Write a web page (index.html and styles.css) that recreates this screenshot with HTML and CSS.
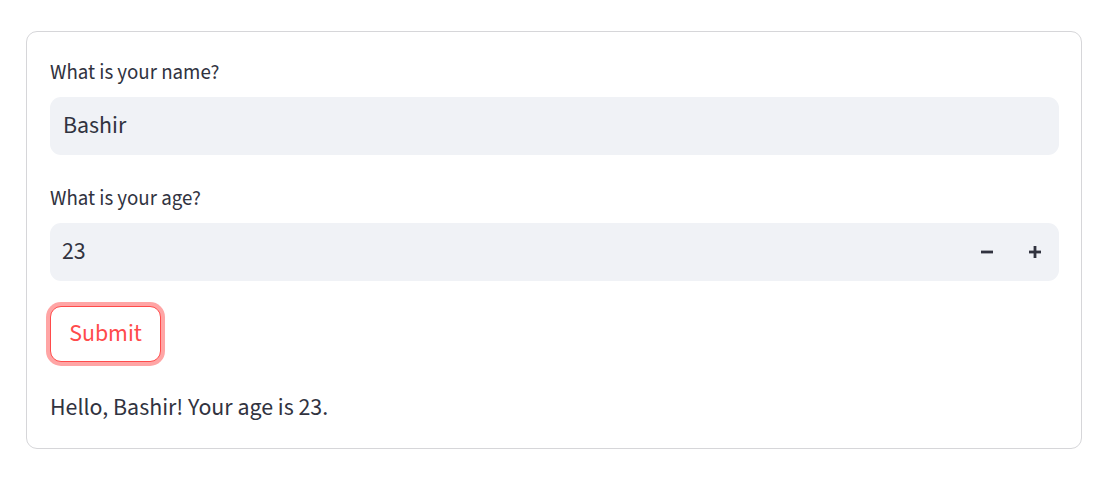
FILE: index.html
```html
<!DOCTYPE html>
<html lang="en">
<head>
<meta charset="utf-8">
<title>Form</title>
<link rel="stylesheet" href="styles.css">
</head>
<body>
<form class="card" onsubmit="return false">
  <label class="label" for="name">What is your name?</label>
  <div class="field">
    <input id="name" class="text" type="text" value="Bashir">
  </div>
  <label class="label label-age" for="age">What is your age?</label>
  <div class="field field-number">
    <input id="age" class="text" type="text" value="23">
    <button type="button" class="step" aria-label="Decrement">
      <svg width="14" height="14" viewBox="0 0 14 14"><rect x="1" y="5.6" width="12" height="2.8" fill="#31333f"/></svg>
    </button>
    <button type="button" class="step" aria-label="Increment">
      <svg width="14" height="14" viewBox="0 0 14 14"><rect x="1" y="5.6" width="12" height="2.8" fill="#31333f"/><rect x="5.6" y="1" width="2.8" height="12" fill="#31333f"/></svg>
    </button>
  </div>
  <button type="submit" class="submit">Submit</button>
  <p class="result">Hello, Bashir! Your age is 23.</p>
</form>
</body>
</html>
```

FILE: styles.css
```css
html, body {
  margin: 0;
  padding: 0;
  background: #ffffff;
}

body {
  font-family: "Source Sans Pro", "Source Sans 3", Lato, "Noto Sans", sans-serif;
  color: #31333f;
  padding: 31px 0 0 26px;
}

.card {
  box-sizing: border-box;
  width: 1056px;
  border: 1px solid #d6d6d9;
  border-radius: 11px;
  padding: 25px 22px 22px 23px;
  display: flex;
  flex-direction: column;
  align-items: flex-start;
}

.label {
  display: block;
  height: 31px;
  line-height: 31px;
  font-size: 20.9px;
  color: #31333f;
  margin-bottom: 9px;
}

.label-age {
  margin-top: 28px;
}

.field {
  box-sizing: border-box;
  width: 1009px;
  height: 58px;
  background: #f0f2f6;
  border-radius: 11px;
  display: flex;
  align-items: center;
}

.text {
  flex: 1;
  min-width: 0;
  height: 100%;
  border: none;
  outline: none;
  background: transparent;
  padding: 0 13px;
  font-family: inherit;
  font-size: 23.9px;
  color: #31333f;
}

.field-number .text {
  padding-left: 12px;
}

.step {
  width: 48px;
  height: 100%;
  border: none;
  background: transparent;
  padding: 0;
  display: flex;
  align-items: center;
  justify-content: center;
  cursor: pointer;
}

.submit {
  margin-top: 25px;
  box-sizing: border-box;
  width: 111px;
  height: 56px;
  border: 1px solid #ff4b4b;
  border-radius: 11px;
  background: #ffffff;
  box-shadow: 0 0 0 4px rgba(255, 75, 75, 0.5);
  color: #ff4b4b;
  font-family: inherit;
  font-size: 23.9px;
  padding: 0;
  cursor: pointer;
}

.result {
  margin: 28px 0 0 0;
  font-size: 23.9px;
  line-height: 36px;
  color: #31333f;
}
```
